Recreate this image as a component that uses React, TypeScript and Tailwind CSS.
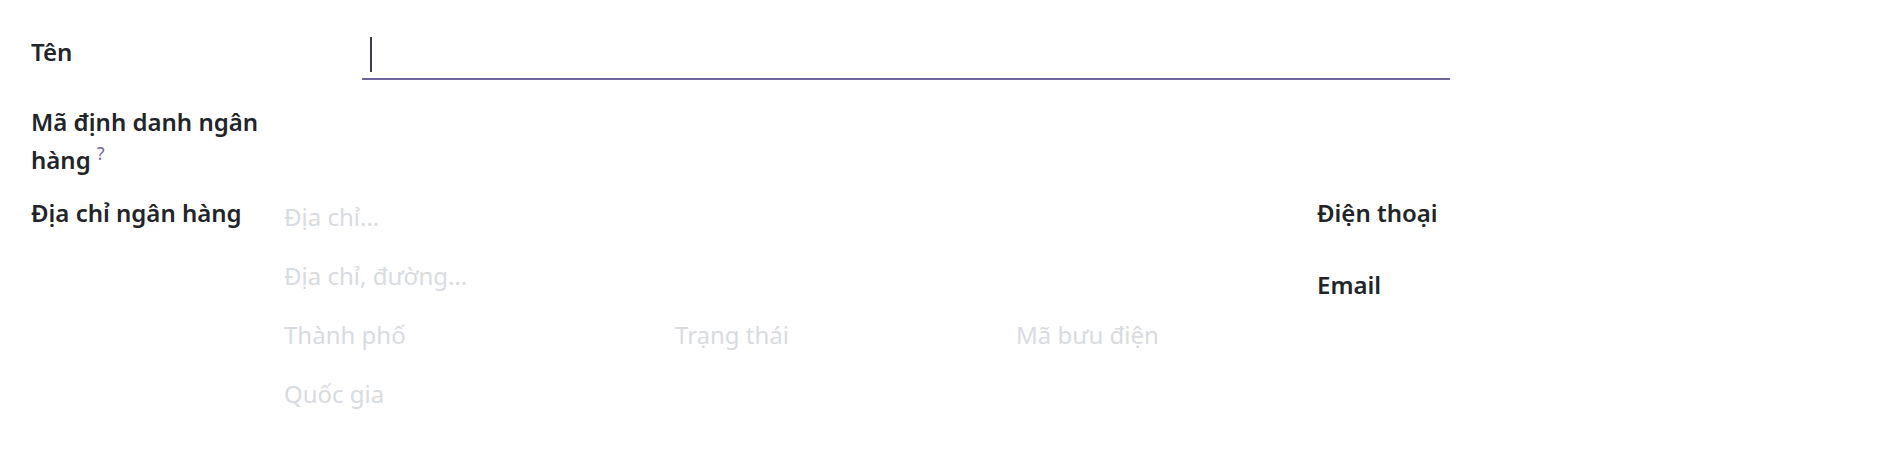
export default function App() {
  return (
    <div className="w-[1883px] h-[459px] bg-white pl-[31px] pt-[33px] font-['Noto_Sans',sans-serif] text-[24px] leading-[38px] text-[#212529]">
      {/* Tên */}
      <div className="flex items-start">
        <label className="w-[331px] font-semibold">Tên</label>
        <div className="mt-px flex h-[46px] w-[1088px] items-start border-b-2 border-[#6e64a0] pl-[8px] pt-[3px]">
          <div className="h-[35px] w-[2px] bg-[#3c4045]" />
        </div>
      </div>

      {/* Mã định danh ngân hàng */}
      <div className="mt-[23px] flex">
        <label className="w-[240px] font-semibold">
          Mã định danh ngân hàng
          <span className="relative top-[3px] ml-[6px] inline-block align-top text-[18px] leading-[18px] font-normal text-[#7a6aaa]">?</span>
        </label>
      </div>

      {/* Địa chỉ ngân hàng + right group */}
      <div className="mt-[15px] flex items-start">
        <label className="w-[253px] font-semibold">Địa chỉ ngân hàng</label>
        <div className="mt-[4px] flex w-[1033px] flex-col gap-[21px] text-[#d8dbe0]">
          <span>Địa chỉ...</span>
          <span>Địa chỉ, đường...</span>
          <div className="flex">
            <span className="w-[391px]">Thành phố</span>
            <span className="w-[341px]">Trạng thái</span>
            <span>Mã bưu điện</span>
          </div>
          <span>Quốc gia</span>
        </div>
        <div className="flex flex-col gap-[34px] font-semibold">
          <label>Điện thoại</label>
          <label>Email</label>
        </div>
      </div>
    </div>
  );
}
